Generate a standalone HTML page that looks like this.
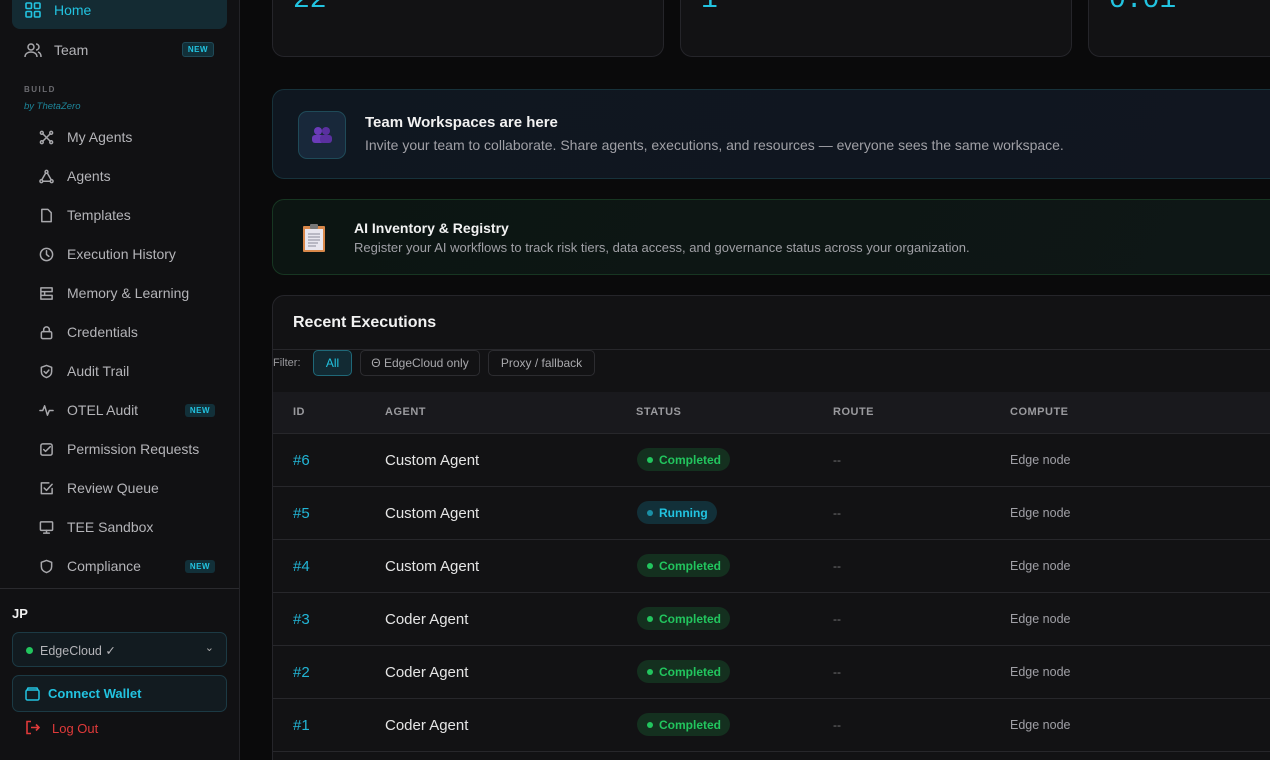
<!DOCTYPE html>
<html><head><meta charset="utf-8"><style>
*{box-sizing:border-box;margin:0;padding:0}
html{overflow:hidden;width:1270px;height:760px}
body{width:1270px;height:760px;overflow:hidden;background:#0a0a0b;font-family:"Liberation Sans",sans-serif;color:#e5e5e5;position:relative}
.sb{position:absolute;left:0;top:0;width:240px;height:760px;background:#111113;border-right:1px solid #232327}
.nav{position:absolute;left:12px;width:215px;height:36px;display:flex;align-items:center;font-size:14px;color:#b4b4b8}
.nav svg{position:absolute;left:27px;width:15px;height:15px;fill:none;stroke:#a8a8ac;stroke-width:1.6;stroke-linecap:round;stroke-linejoin:round}
.nav span{position:absolute;left:55px}
.new{position:absolute;right:12px;background:#123039;color:#22c3e0;font-size:8px;font-weight:bold;padding:2px 5px;border-radius:3px;letter-spacing:.5px}
.main{position:absolute;left:240px;top:0;right:0;bottom:0;overflow:hidden}
.card{position:absolute;background:#121214;border:1px solid #25252a;border-radius:12px}
.num{position:absolute;left:20px;top:4px;font-family:"Liberation Mono",monospace;font-size:28px;color:#22c3e0}
.row{position:absolute;left:0;right:0;height:53px;border-top:1px solid #27272b;font-size:15px}
.row div{position:absolute;top:18px}
.pill{position:absolute;top:14px!important;height:23px;border-radius:12px;font-size:12px;font-weight:bold;display:flex;align-items:center;padding:0 9px 0 10px}
.pill i{width:6px;height:6px;border-radius:50%;margin-right:6px;display:inline-block}
.c{background:#14301f;color:#22c55e}.c i{background:#22c55e}
.r{background:#123039;color:#22c3e0}.r i{background:#1a8fa6}
.cmp{left:737px;font-size:12.5px;color:#a0a0a6;top:19px!important}
.rt{left:560px;color:#777;font-size:12px;top:19px!important}
</style></head><body>
<div class="sb">
 <div style="position:absolute;left:12px;top:-8px;width:215px;height:37px;background:#142b33;border-radius:8px"></div>
 <svg style="position:absolute;left:25px;top:2px" width="16" height="16" viewBox="0 0 16 16" fill="none" stroke="#22c3e0" stroke-width="1.6"><rect x="1" y="1" width="5.5" height="5.5" rx="1"/><rect x="9.5" y="1" width="5.5" height="5.5" rx="1"/><rect x="1" y="9.5" width="5.5" height="5.5" rx="1"/><rect x="9.5" y="9.5" width="5.5" height="5.5" rx="1"/></svg>
 <div style="position:absolute;left:54px;top:2px;font-size:14px;color:#22c3e0">Home</div>
 <svg style="position:absolute;left:24px;top:42px" width="18" height="16" viewBox="0 0 18 16" fill="none" stroke="#a8a8ac" stroke-width="1.5"><circle cx="7" cy="5" r="3"/><path d="M1 15c0-3.5 3-5 6-5s6 1.5 6 5M12 2a3 3 0 010 6M14 10c2 .5 3 2 3 5"/></svg>
 <div style="position:absolute;left:54px;top:42px;font-size:14px;color:#b4b4b8">Team</div>
 <div class="new" style="top:42px;right:25px;border:1px solid #1f4a58">NEW</div>
 <div style="position:absolute;left:24px;top:85px;font-size:8px;font-weight:bold;letter-spacing:1.5px;color:#6b6b70">BUILD</div>
 <div style="position:absolute;left:24px;top:101px;font-size:9.5px;font-style:italic;color:#1d8599">by ThetaZero</div>
 <div class="nav" style="top:119px"><svg viewBox="0 0 16 16"><circle cx="3" cy="3" r="1.5"/><circle cx="13" cy="3" r="1.5"/><circle cx="3" cy="13" r="1.5"/><circle cx="13" cy="13" r="1.5"/><path d="M4 4l8 8M12 4l-8 8"/></svg><span>My Agents</span></div>
 <div class="nav" style="top:158px"><svg viewBox="0 0 16 16"><circle cx="8" cy="3" r="1.5"/><circle cx="2.5" cy="13" r="1.5"/><circle cx="13.5" cy="13" r="1.5"/><path d="M7 4.5L3 11.5M9 4.5l4 7M4 13h8"/></svg><span>Agents</span></div>
 <div class="nav" style="top:197px"><svg viewBox="0 0 16 16"><path d="M3 1.5h6.5L13 5v9.5H3z"/></svg><span>Templates</span></div>
 <div class="nav" style="top:236px"><svg viewBox="0 0 16 16"><circle cx="8" cy="8" r="6.5"/><path d="M8 4v4l2.5 2"/></svg><span>Execution History</span></div>
 <div class="nav" style="top:275px"><svg viewBox="0 0 16 16"><path d="M2 2h12v4H2zM2 10h12v4H2zM6 6v4M2 2v12"/></svg><span>Memory &amp; Learning</span></div>
 <div class="nav" style="top:314px"><svg viewBox="0 0 16 16"><rect x="2.5" y="7" width="11" height="7.5" rx="1.5"/><path d="M5 7V5a3 3 0 016 0v2"/></svg><span>Credentials</span></div>
 <div class="nav" style="top:353px"><svg viewBox="0 0 16 16"><path d="M8 1.5l5.5 2v4.5c0 3.5-2.5 5.5-5.5 6.5-3-1-5.5-3-5.5-6.5V3.5z"/><path d="M5.5 8l2 2 3-3.5"/></svg><span>Audit Trail</span></div>
 <div class="nav" style="top:392px"><svg viewBox="0 0 16 16"><path d="M1 8h3l2-5 3 10 2-5h4"/></svg><span>OTEL Audit</span><div class="new">NEW</div></div>
 <div class="nav" style="top:431px"><svg viewBox="0 0 16 16"><rect x="2" y="2" width="12" height="12" rx="2"/><path d="M5 8l2 2 5-5"/></svg><span>Permission Requests</span></div>
 <div class="nav" style="top:470px"><svg viewBox="0 0 16 16"><path d="M14 8v5.5H2.5V2h8"/><path d="M5.5 7.5l2.5 2.5 6-6.5"/></svg><span>Review Queue</span></div>
 <div class="nav" style="top:509px"><svg viewBox="0 0 16 16"><rect x="1.5" y="2" width="13" height="9" rx="1"/><path d="M5 14h6M8 11v3"/></svg><span>TEE Sandbox</span></div>
 <div class="nav" style="top:548px"><svg viewBox="0 0 16 16"><path d="M8 1.5l5.5 2v4.5c0 3.5-2.5 5.5-5.5 6.5-3-1-5.5-3-5.5-6.5V3.5z"/></svg><span>Compliance</span><div class="new">NEW</div></div>
 <div style="position:absolute;left:0;right:0;top:588px;border-top:1px solid #2a2a2e"></div>
 <div style="position:absolute;left:12px;top:606px;font-size:13px;font-weight:bold;color:#f0f0f0">JP</div>
 <div style="position:absolute;left:12px;top:632px;width:215px;height:35px;background:#121b20;border:1px solid #1c3a44;border-radius:7px">
  <i style="position:absolute;left:13px;top:14px;width:7px;height:7px;border-radius:50%;background:#22c55e"></i>
  <span style="position:absolute;left:27px;top:10px;font-size:12.5px;color:#b4b4b8">EdgeCloud ✓</span>
  <span style="position:absolute;right:12px;top:8px;font-size:11px;color:#aaa">⌄</span></div>
 <div style="position:absolute;left:12px;top:675px;width:215px;height:37px;background:#121b20;border:1px solid #1c3a44;border-radius:7px">
  <svg style="position:absolute;left:12px;top:11px" width="15" height="14" viewBox="0 0 15 14" fill="none" stroke="#22c3e0" stroke-width="1.5"><rect x="1" y="3" width="13" height="10" rx="1.5"/><path d="M2 3l1-2h9l1 2"/></svg>
  <span style="position:absolute;left:35px;top:10px;font-size:13px;font-weight:bold;color:#22c3e0">Connect Wallet</span></div>
 <svg style="position:absolute;left:25px;top:720px" width="15" height="15" viewBox="0 0 15 15" fill="none" stroke="#e03a3a" stroke-width="1.6"><path d="M6 1.5H2v12h4M6 7.5h8M11 4.5l3 3-3 3"/></svg>
 <div style="position:absolute;left:52px;top:721px;font-size:13px;color:#e03a3a">Log Out</div>
</div>
<div class="main">
 <div class="card" style="left:32px;top:-20px;width:392px;height:77px"><div class="num">22</div></div>
 <div class="card" style="left:440px;top:-20px;width:392px;height:77px"><div class="num">1</div></div>
 <div class="card" style="left:848px;top:-20px;width:420px;height:77px"><div class="num">0.01</div></div>
 <div style="position:absolute;left:32px;top:89px;right:0;height:90px;background:linear-gradient(120deg,#0f1720,#111620);border:1px solid #17323b;border-right:none;border-radius:12px 0 0 12px">
  <div style="position:absolute;left:25px;top:21px;width:48px;height:48px;border-radius:9px;background:#18283a;border:1px solid #1f4a58;text-align:center;padding-top:13px">
   <svg width="24" height="20" viewBox="0 0 24 20"><circle cx="8" cy="6" r="4" fill="#6a3bb8"/><circle cx="16" cy="6" r="4" fill="#5a30a0"/><rect x="2" y="10" width="12" height="8" rx="3" fill="#6a3bb8"/><rect x="10" y="10" width="12" height="8" rx="3" fill="#5a30a0"/></svg></div>
  <div style="position:absolute;left:92px;top:24px;font-size:15px;font-weight:bold;color:#f2f2f2">Team Workspaces are here</div>
  <div style="position:absolute;left:92px;top:47px;font-size:14px;color:#a0a0a6">Invite your team to collaborate. Share agents, executions, and resources — everyone sees the same workspace.</div>
 </div>
 <div style="position:absolute;left:32px;top:199px;right:0;height:76px;background:linear-gradient(120deg,#0c1512,#0e1716);border:1px solid #173622;border-right:none;border-radius:12px 0 0 12px">
  <svg style="position:absolute;left:29px;top:23px" width="24" height="30" viewBox="0 0 24 30"><rect x="1" y="3" width="22" height="26" rx="1" fill="#d9884a"/><rect x="3" y="6" width="18" height="21" fill="#e8e6ef"/><rect x="8" y="1" width="8" height="5" rx="1" fill="#777"/><path d="M6 11h12M6 14h12M6 17h12M6 20h10M6 23h8" stroke="#8a8a9a" stroke-width="1"/></svg>
  <div style="position:absolute;left:81px;top:20px;font-size:14px;font-weight:bold;color:#f2f2f2">AI Inventory &amp; Registry</div>
  <div style="position:absolute;left:81px;top:40px;font-size:13px;color:#a0a0a6">Register your AI workflows to track risk tiers, data access, and governance status across your organization.</div>
 </div>
 <div style="position:absolute;left:32px;top:295px;right:0;height:465px;background:#121214;border:1px solid #25252a;border-right:none;border-bottom:none;border-radius:12px 0 0 0;overflow:hidden">
  <div style="position:absolute;left:20px;top:18px;font-size:16px;font-weight:bold;color:#f2f2f2">Recent Executions</div>
  <div style="position:absolute;left:0;right:0;top:53px;border-top:1px solid #27272b"></div>
  <div style="position:absolute;left:0;top:61px;font-size:11px;color:#9a9a9e">Filter:</div>
  <div style="position:absolute;left:40px;top:54px;width:39px;height:26px;border:1px solid #1f6878;background:#122a33;border-radius:5px;color:#22c3e0;font-size:12px;text-align:center;line-height:24px">All</div>
  <div style="position:absolute;left:87px;top:54px;width:120px;height:26px;border:1px solid #2c2c30;border-radius:5px;color:#a8a8ac;font-size:12px;text-align:center;line-height:24px">Θ EdgeCloud only</div>
  <div style="position:absolute;left:215px;top:54px;width:107px;height:26px;border:1px solid #2c2c30;border-radius:5px;color:#a8a8ac;font-size:12px;text-align:center;line-height:24px">Proxy / fallback</div>
  <div style="position:absolute;left:0;right:0;top:96px;height:41px;background:#19191d;font-size:11px;font-weight:bold;color:#9a9a9e;letter-spacing:.5px">
   <div style="position:absolute;left:20px;top:14px">ID</div><div style="position:absolute;left:112px;top:14px">AGENT</div><div style="position:absolute;left:363px;top:14px">STATUS</div><div style="position:absolute;left:560px;top:14px">ROUTE</div><div style="position:absolute;left:737px;top:14px">COMPUTE</div></div>
  <div class="row" style="top:137px"><div style="left:20px;color:#22b5d6">#6</div><div style="left:112px">Custom Agent</div><div class="pill c" style="left:364px"><i></i>Completed</div><div class="rt">--</div><div class="cmp">Edge node</div></div>
  <div class="row" style="top:190px"><div style="left:20px;color:#22b5d6">#5</div><div style="left:112px">Custom Agent</div><div class="pill r" style="left:364px"><i></i>Running</div><div class="rt">--</div><div class="cmp">Edge node</div></div>
  <div class="row" style="top:243px"><div style="left:20px;color:#22b5d6">#4</div><div style="left:112px">Custom Agent</div><div class="pill c" style="left:364px"><i></i>Completed</div><div class="rt">--</div><div class="cmp">Edge node</div></div>
  <div class="row" style="top:296px"><div style="left:20px;color:#22b5d6">#3</div><div style="left:112px">Coder Agent</div><div class="pill c" style="left:364px"><i></i>Completed</div><div class="rt">--</div><div class="cmp">Edge node</div></div>
  <div class="row" style="top:349px"><div style="left:20px;color:#22b5d6">#2</div><div style="left:112px">Coder Agent</div><div class="pill c" style="left:364px"><i></i>Completed</div><div class="rt">--</div><div class="cmp">Edge node</div></div>
  <div class="row" style="top:402px;height:52px"><div style="left:20px;color:#22b5d6">#1</div><div style="left:112px">Coder Agent</div><div class="pill c" style="left:364px"><i></i>Completed</div><div class="rt">--</div><div class="cmp">Edge node</div></div>
  <div style="position:absolute;left:0;right:0;top:455px;border-top:1px solid #27272b"></div>
 </div>
</div>
</body></html>
